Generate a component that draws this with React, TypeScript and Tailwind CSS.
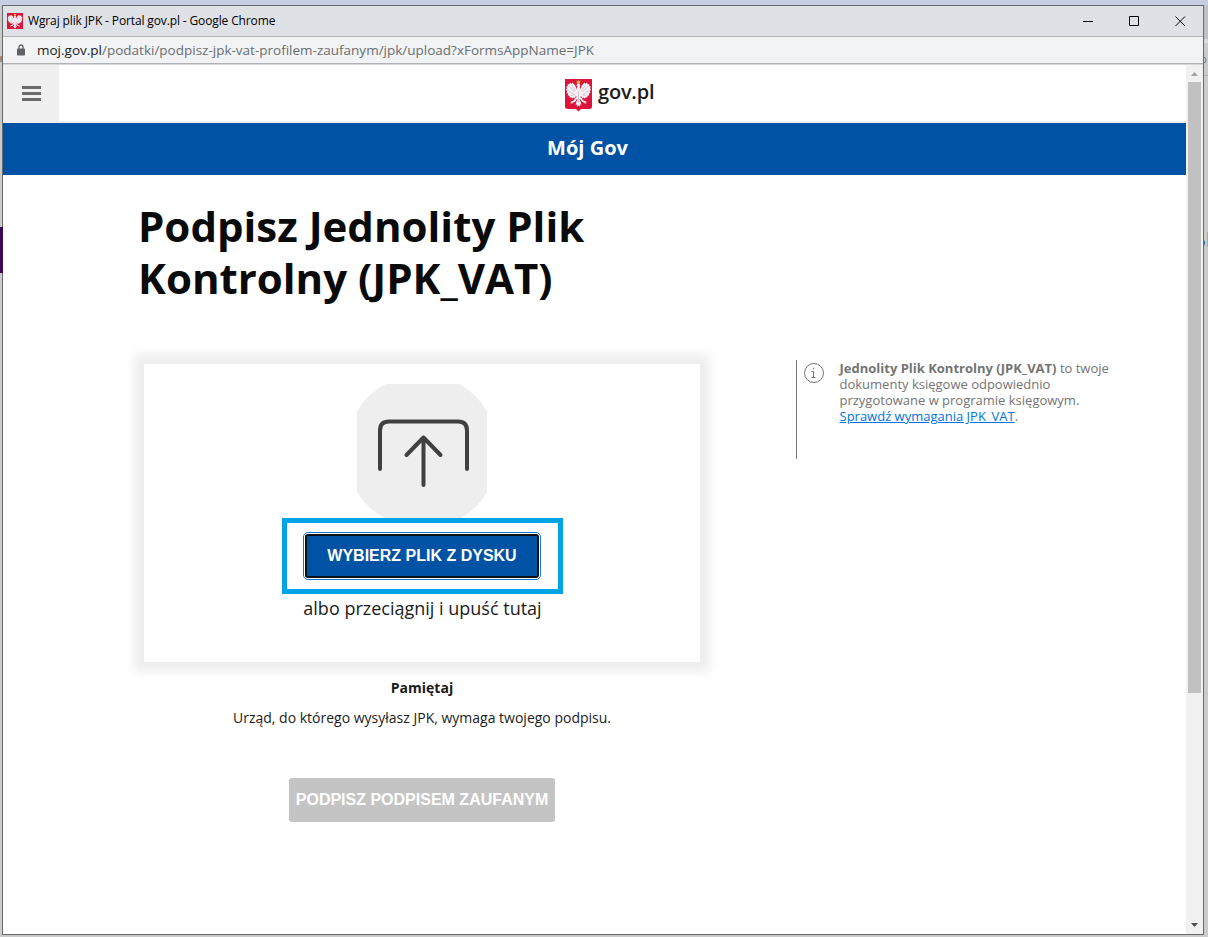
import React from "react";

const Eagle = () => (
  <>
    <g fill="#f6f1f4">
      {/* wings */}
      <path d="M12 11.500Q11 6 7.200 3.500L6.300 5 5 3.600 4.300 5.300 2.600 5.200 2.800 7 1.200 7.800 2 9.300.9 10.800 2.200 12 1.500 13.800 3 14.600 2.800 16.500 4.500 16.700 4.700 18.600 6.300 18.200 7 19.800 8.300 18.600 9.500 19.500 10.500 17.500 12 17z" />
      <path d="M15 11.500Q16 6 19.800 3.500L20.700 5 22 3.600 22.700 5.300 24.400 5.200 24.200 7 25.800 7.800 25 9.300 26.100 10.800 24.800 12 25.500 13.800 24 14.600 24.200 16.500 22.500 16.700 22.300 18.600 20.700 18.200 20 19.800 18.700 18.600 17.500 19.500 16.500 17.500 15 17z" />
      {/* head, body and tail */}
      <path d="M11.300 6.500L12.300 4.800Q13.500 4 14.700 4.800 15.800 6 14.700 8L15.700 11.500 15.800 17 14.700 20.500 16.500 25.500 15.300 25.300 15 27.500 13.500 26.600 12 27.500 11.700 25.300 10.500 25.500 12.300 20.500 11.200 17 11.300 11.500 12.500 7z" />
    </g>
    <path
      d="M11.800 18.500L9.500 22 6.200 23.300M15.200 18.500L17.500 22 20.800 23.300"
      stroke="#f6f1f4"
      strokeWidth="1.800"
      fill="none"
    />
    <path
      d="M4 7.500L9.500 13M3.300 11.500L9 15.500M6.500 6L10.500 12M6 16.500L9.500 16M23 7.500L17.500 13M23.700 11.500L18 15.500M20.500 6L16.500 12M21 16.500L17.500 16M13.500 12v12"
      stroke="#b9a9bc"
      strokeWidth=".6"
      fill="none"
    />
    <path d="M11.600 1.600l1 .7.9-1 .9 1 1-.7-.4 2.800h-3z" fill="#f0bf43" />
    <path d="M5 24.200l1.500-1.700 1.200 2zM22 24.200l-1.500-1.700-1.200 2z" fill="#f3c9a0" />
  </>
);

const Emblem = () => (
  <svg width="27" height="33" viewBox="0 0 27 33">
    <path d="M0 0h27v27.500q0 2.500-3 2.500h-8l-2.500 2.500L11 30H3q-3 0-3-2.500z" fill="#dc143c" />
    <Eagle />
  </svg>
);

const TitleBar = () => (
  <div className="flex h-[31px] items-center border-b border-[#b0b2b5] bg-[#dee1e6] pl-1">
    <svg width="16" height="16" viewBox="0 0 27 29" preserveAspectRatio="none">
      <path d="M0 0h27v29H0z" fill="#dc143c" />
      <Eagle />
    </svg>
    <span className="ml-[5px] text-[12px] tracking-[-0.13px] whitespace-nowrap text-black">
      Wgraj plik JPK - Portal gov.pl - Google Chrome
    </span>
    <div className="mr-[17px] ml-auto flex gap-[35px]">
      <svg width="11" height="11" viewBox="0 0 11 11" stroke="#000" fill="none">
        <path d="M0 5.500h10" />
      </svg>
      <svg width="11" height="11" viewBox="0 0 11 11" stroke="#000" fill="none">
        <path d="M.5.500h9v9h-9z" />
      </svg>
      <svg width="11" height="11" viewBox="0 0 11 11" stroke="#000" fill="none">
        <path d="M.5.500l9.500 9.500M10 .500l-9.500 9.500" />
      </svg>
    </div>
  </div>
);

const AddressBar = () => (
  <div className="border-b border-[#d5d7da]">
    <div className="flex h-[27px] items-center border-b border-[#b0b2b5] bg-[#f1f3f4] pl-[14px]">
      <svg width="8" height="12" viewBox="0 0 8 12">
        <path d="M2 5V3a2 2 0 0 1 4 0v2" fill="none" stroke="#5f6368" strokeWidth="1.300" />
        <rect y="4.500" width="8" height="7" rx="1" fill="#5f6368" />
      </svg>
      <span className="ml-[12px] text-[13.5px] whitespace-nowrap text-[#6b6e72]">
        <span className="text-[#202124]">moj.gov.pl</span>
        /podatki/podpisz-jpk-vat-profilem-zaufanym/jpk/upload?xFormsAppName=JPK
      </span>
    </div>
  </div>
);

const Scrollbar = () => (
  <div className="flex w-[17px] flex-col items-center bg-[#f1f1f1]">
    <svg width="17" height="17" viewBox="0 0 17 17">
      <path d="M5 11h7L8.500 7z" fill="#a3a3a3" />
    </svg>
    <div className="h-[611px] w-[13px] bg-[#c1c1c1]" />
    <svg className="mt-auto" width="17" height="17" viewBox="0 0 17 17">
      <path d="M5 6h7l-3.500 4z" fill="#505050" />
    </svg>
  </div>
);

const Header = () => (
  <header>
    <div className="flex h-[58px] border-b-2 border-[#f0f0f0]">
      <div className="flex w-[56px] items-center justify-center bg-[#f0f0f0]">
        <svg width="19" height="15" viewBox="0 0 19 15" fill="#6b6b6b">
          <path d="M0 0h19v3H0zM0 6h19v3H0zM0 12h19v3H0z" />
        </svg>
      </div>
      <div className="ml-[506px] flex pt-[14px]">
        <Emblem />
        <span className="ml-[6px] text-[20px] leading-[26px] font-semibold tracking-[-0.2px] text-[#1b1b1b]">
          gov.pl
        </span>
      </div>
    </div>
    <div className="h-[52px] bg-[#0052a5] pr-[14px] text-center text-[20px] leading-[50px] font-bold text-white">
      Mój Gov
    </div>
  </header>
);

const UploadIcon = () => (
  <svg width="130" height="134" viewBox="0 0 130 134">
    <path
      d="M29 0h73q17 9 28 27v81q-9 16-26 26H27Q11 125 0 108V27Q11 9 29 0z"
      fill="#eee"
    />
    <path
      d="M23 85V46.500q0-9 9-9h69q9 0 9 9V85M66.500 101V53.500M49.500 71l17-17.500 17 17.500"
      fill="none"
      stroke="#404040"
      strokeWidth="4"
      strokeLinecap="round"
      strokeLinejoin="round"
    />
  </svg>
);

const UploadBox = () => (
  <div className="flex h-[298px] w-[556px] flex-col items-center bg-white pt-5 shadow-[0_0_10px_10px_#eee]">
    <UploadIcon />
    <div className="flex h-[76px] w-[281px] items-center justify-center border-[5px] border-[#00a2e8]">
      <button className="h-[44px] w-[234px] rounded-[3px] border-2 border-[#101010] bg-[#0052a5] font-['Liberation_Sans',sans-serif] text-[16px] font-bold whitespace-nowrap text-white ring-1 ring-white outline outline-[#1a73d8] outline-offset-1">
        WYBIERZ PLIK Z DYSKU
      </button>
    </div>
    <p className="pl-px text-[18px] leading-[28px] text-[#1b1b1b]">albo przeciągnij i upuść tutaj</p>
  </div>
);

const InfoBox = () => (
  <aside className="ml-[96px] flex h-[99px] border-l border-[#747474] text-[13px] leading-4 text-[#747474]">
    <svg className="mt-[3px] ml-[7px]" width="20" height="20" viewBox="0 0 20 20" fill="none" stroke="#747474">
      <circle cx="10" cy="10" r="9.500" />
      <path d="M7.500 8.500H9.500v6M7.500 14.500h4" />
      <circle cx="9.500" cy="5.500" r=".4" fill="#747474" />
    </svg>
    <p className="ml-[15.5px] whitespace-nowrap">
      <b>Jednolity Plik Kontrolny (JPK_VAT)</b> to twoje
      <br />
      dokumenty księgowe odpowiednio
      <br />
      przygotowane w programie księgowym.
      <br />
      <a className="text-[#0072e3] underline">Sprawdź wymagania JPK_VAT</a>.
    </p>
  </aside>
);

const App = () => {
  return (
    <div className="relative h-[937px] w-[1208px] overflow-hidden bg-[#cbcbcc] pt-[5px] pl-[2px] font-['Open_Sans',sans-serif]">
      {/* what shows of the window behind */}
      <div className="absolute top-0 left-0 h-[5px] w-full bg-[#c6cfe1]" />
      <div className="absolute top-[5px] right-0 h-[34px] w-1 bg-[#bfc0c5]" />
      <div className="absolute top-[39px] right-0 h-[4px] w-1 bg-[#d9dadb]" />
      <div className="absolute top-[75px] right-0 h-px w-1 bg-[#b0b2b5]" />
      <div className="absolute top-[56px] left-0 h-[6px] w-[2px] bg-[#a98a7a]" />
      <span className="absolute top-[49px] left-[1196px] text-[13px] text-[#50759c]">%</span>
      <span className="absolute top-[230px] left-[1196px] text-[15px] font-bold text-[#123a7c]">o</span>
      <div className="absolute top-[232px] right-0 h-[15px] w-px bg-[#d2a65f]" />

      <div className="relative flex h-[930px] w-[1202px] flex-col border border-[#68696b] bg-white">
        <TitleBar />
        <AddressBar />
        <div className="flex flex-1">
          <div className="w-[1183px]">
            <Header />
            <main className="pl-[135px]">
              <h1 className="pt-[25px] text-[42px] leading-[52px] font-bold whitespace-nowrap text-[#0a0a0a]">
                Podpisz Jednolity Plik
                <br />
                Kontrolny (JPK_VAT)
              </h1>
              <div className="mt-[56px] flex">
                <div className="mt-[4px] ml-[6px] flex flex-col items-center">
                  <UploadBox />
                  <h2 className="mt-[16px] text-[14px] leading-5 font-bold text-[#1b1b1b]">Pamiętaj</h2>
                  <p className="mt-[10px] text-[14px] leading-5 text-[#1b1b1b]">
                    Urząd, do którego wysyłasz JPK, wymaga twojego podpisu.
                  </p>
                  <button className="mt-[50px] h-[44px] w-[266px] rounded-[3px] bg-[#c4c4c4] font-['Liberation_Sans',sans-serif] text-[16px] font-bold whitespace-nowrap text-white">
                    PODPISZ PODPISEM ZAUFANYM
                  </button>
                </div>
                <InfoBox />
              </div>
            </main>
          </div>
          <Scrollbar />
        </div>
      </div>
      <div className="absolute top-[227px] left-0 h-[46px] w-[3px] bg-[#3b0a56]" />
    </div>
  );
};

export default App;
